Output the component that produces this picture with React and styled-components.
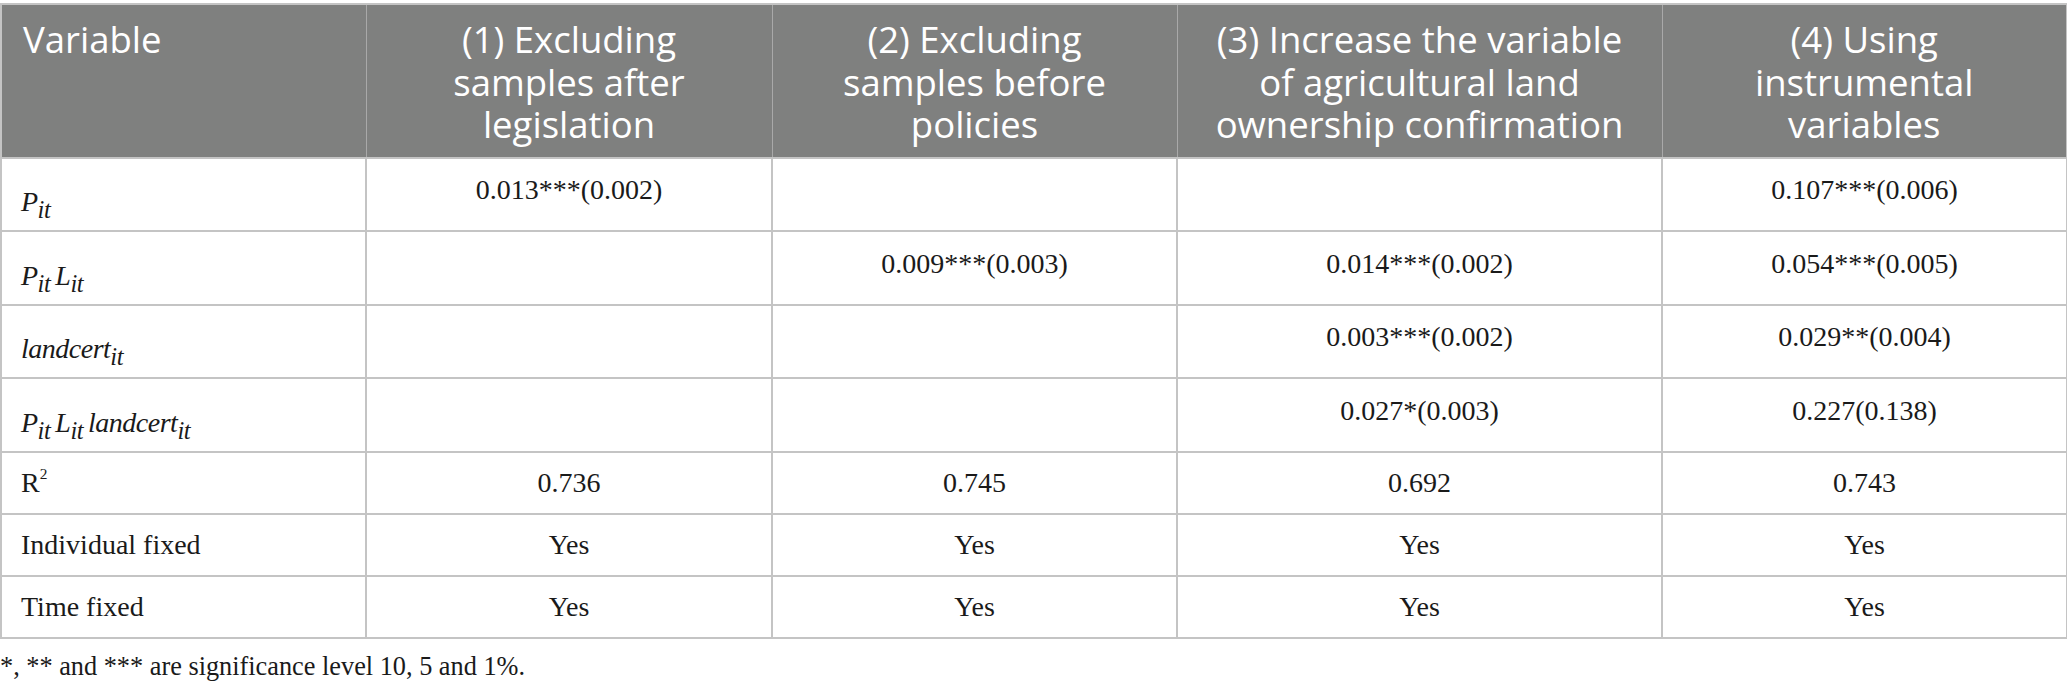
import React from 'react';
import styled, { createGlobalStyle } from 'styled-components';

const GlobalStyle = createGlobalStyle`
  html, body {
    margin: 0;
    padding: 0;
    background: #fff;
  }
  body {
    padding-top: 3px;
  }
`;

const Wrap = styled.div`
  width: 2067px;
`;

const Table = styled.table`
  width: 2066px;
  border-collapse: collapse;
  table-layout: fixed;
  font-family: "Liberation Serif", "Times New Roman", serif;
  font-size: 28px;
  color: #1a1a1a;
  border: 2px solid #c4c4c4;
`;

const HeadCell = styled.th`
  background: #7f807f;
  color: #fff;
  font-family: "Open Sans", "Noto Sans", sans-serif;
  font-weight: 400;
  font-size: 36.5px;
  line-height: 42.5px;
  vertical-align: top;
  text-align: ${({ $left }) => ($left ? 'left' : 'center')};
  padding: ${({ $left }) => ($left ? '13px 10px 11px 21px' : '13px 8px 11px')};
  border: 1px solid #a9a9a9;
  height: 127px;
  white-space: nowrap;
`;

const Row = styled.tr`
  height: ${({ $tall }) => ($tall ? '73.6px' : '62px')};
`;

const Cell = styled.td`
  border: 2px solid #c4c4c4;
  padding: ${({ $tall }) => ($tall ? '0 19px 8px' : '0 19px')};
  text-align: ${({ $left }) => ($left ? 'left' : 'center')};
  vertical-align: middle;
  white-space: nowrap;
`;

const Formula = styled.span`
  display: inline-block;
  padding-top: 24px;
  font-style: italic;
  letter-spacing: -0.5px;
`;

const Sub = styled.sub`
  font-size: 0.88em;
  vertical-align: -0.28em;
  line-height: 0;
  margin-right: 5px;
`;

const Sup = styled.sup`
  font-size: 0.55em;
  vertical-align: 0.85em;
  line-height: 0;
`;

const Note = styled.p`
  margin: 13px 0 0 0;
  font-family: "Liberation Serif", "Times New Roman", serif;
  font-size: 26.3px;
  color: #1a1a1a;
`;

const V = ({ children }) => (
  <>
    {children}
    <Sub>it</Sub>
  </>
);

const columns = [
  '(1) Excluding samples after legislation',
  '(2) Excluding samples before policies',
  '(3) Increase the variable of agricultural land ownership confirmation',
  '(4) Using instrumental variables',
];

const headLines = [
  ['(1) Excluding', 'samples after', 'legislation'],
  ['(2) Excluding', 'samples before', 'policies'],
  ['(3) Increase the variable', 'of agricultural land', 'ownership confirmation'],
  ['(4) Using', 'instrumental', 'variables'],
];

const rows = [
  {
    label: <Formula><V>P</V></Formula>,
    values: ['0.013***(0.002)', '', '', '0.107***(0.006)'],
    tall: true,
  },
  {
    label: <Formula><V>P</V><V>L</V></Formula>,
    values: ['', '0.009***(0.003)', '0.014***(0.002)', '0.054***(0.005)'],
    tall: true,
  },
  {
    label: <Formula><V>landcert</V></Formula>,
    values: ['', '', '0.003***(0.002)', '0.029**(0.004)'],
    tall: true,
  },
  {
    label: <Formula><V>P</V><V>L</V><V>landcert</V></Formula>,
    values: ['', '', '0.027*(0.003)', '0.227(0.138)'],
    tall: true,
  },
  {
    label: <>R<Sup>2</Sup></>,
    values: ['0.736', '0.745', '0.692', '0.743'],
  },
  {
    label: 'Individual fixed',
    values: ['Yes', 'Yes', 'Yes', 'Yes'],
  },
  {
    label: 'Time fixed',
    values: ['Yes', 'Yes', 'Yes', 'Yes'],
  },
];

const widths = [365, 406, 405, 485, 405];

export default function App() {
  return (
    <Wrap>
      <GlobalStyle />
      <Table aria-label={columns.join('; ')}>
        <colgroup>
          {widths.map((w, i) => (
            <col key={i} style={{ width: w }} />
          ))}
        </colgroup>
        <thead>
          <tr>
            <HeadCell $left>Variable</HeadCell>
            {headLines.map((lines, i) => (
              <HeadCell key={i}>
                {lines.map((l, j) => (
                  <React.Fragment key={j}>
                    {l}
                    {j < lines.length - 1 && <br />}
                  </React.Fragment>
                ))}
              </HeadCell>
            ))}
          </tr>
        </thead>
        <tbody>
          {rows.map((r, i) => (
            <Row key={i} $tall={r.tall}>
              <Cell $left $tall={r.tall}>{r.label}</Cell>
              {r.values.map((v, j) => (
                <Cell key={j} $tall={r.tall}>{v}</Cell>
              ))}
            </Row>
          ))}
        </tbody>
      </Table>
      <Note>*, ** and *** are significance level 10, 5 and 1%.</Note>
    </Wrap>
  );
}
